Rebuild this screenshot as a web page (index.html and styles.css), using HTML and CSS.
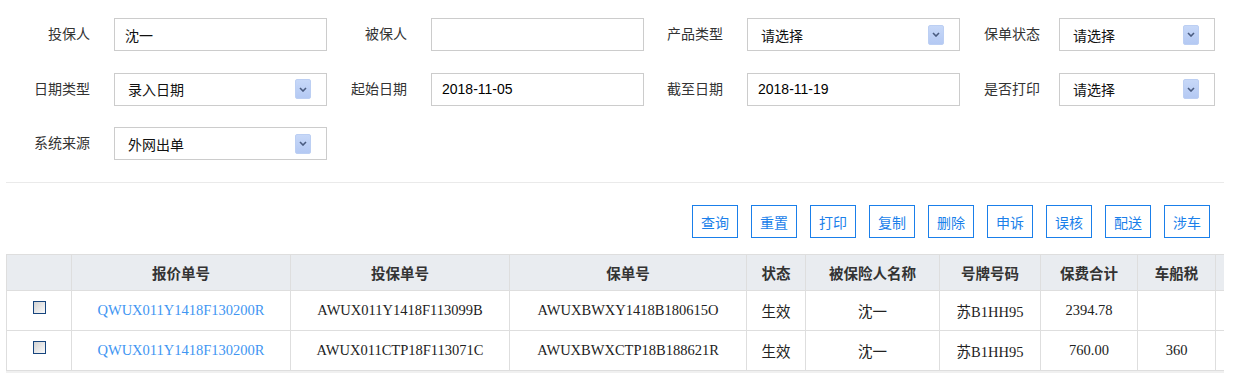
FILE: index.html
```html
<!DOCTYPE html>
<html lang="zh-CN">
<head>
<meta charset="utf-8">
<title>保单查询</title>
<link rel="stylesheet" href="styles.css">
</head>
<body>
<form class="search-form">
  <label class="lbl">投保人</label>
  <div class="field"><span class="val">沈一</span></div>
  <label class="lbl">被保人</label>
  <div class="field"></div>
  <label class="lbl">产品类型</label>
  <div class="field select"><span class="val">请选择</span><span class="arrow"><svg width="8" height="5" viewBox="0 0 8 5"><path d="M1 1 L4 4 L7 1" fill="none" stroke="#4a5c80" stroke-width="1.6"/></svg></span></div>
  <label class="lbl lbl-narrow">保单状态</label>
  <div class="field select"><span class="val">请选择</span><span class="arrow"><svg width="8" height="5" viewBox="0 0 8 5"><path d="M1 1 L4 4 L7 1" fill="none" stroke="#4a5c80" stroke-width="1.6"/></svg></span></div>

  <label class="lbl">日期类型</label>
  <div class="field select"><span class="val">录入日期</span><span class="arrow"><svg width="8" height="5" viewBox="0 0 8 5"><path d="M1 1 L4 4 L7 1" fill="none" stroke="#4a5c80" stroke-width="1.6"/></svg></span></div>
  <label class="lbl">起始日期</label>
  <div class="field"><span class="val date">2018-11-05</span></div>
  <label class="lbl">截至日期</label>
  <div class="field"><span class="val date">2018-11-19</span></div>
  <label class="lbl lbl-narrow">是否打印</label>
  <div class="field select"><span class="val">请选择</span><span class="arrow"><svg width="8" height="5" viewBox="0 0 8 5"><path d="M1 1 L4 4 L7 1" fill="none" stroke="#4a5c80" stroke-width="1.6"/></svg></span></div>

  <label class="lbl">系统来源</label>
  <div class="field select"><span class="val">外网出单</span><span class="arrow"><svg width="8" height="5" viewBox="0 0 8 5"><path d="M1 1 L4 4 L7 1" fill="none" stroke="#4a5c80" stroke-width="1.6"/></svg></span></div>
</form>

<div class="content">
  <div class="divider"></div>
  <div class="toolbar">
    <button class="btn" type="button">查询</button>
    <button class="btn" type="button">重置</button>
    <button class="btn" type="button">打印</button>
    <button class="btn" type="button">复制</button>
    <button class="btn" type="button">删除</button>
    <button class="btn" type="button">申诉</button>
    <button class="btn" type="button">误核</button>
    <button class="btn" type="button">配送</button>
    <button class="btn" type="button">涉车</button>
  </div>
  <div class="table-wrap">
    <table class="grid">
      <colgroup>
        <col class="c-chk"><col class="c-quote"><col class="c-app"><col class="c-pol"><col class="c-state"><col class="c-name"><col class="c-plate"><col class="c-fee"><col class="c-tax"><col class="c-more">
      </colgroup>
      <thead>
        <tr><th></th><th>报价单号</th><th>投保单号</th><th>保单号</th><th>状态</th><th>被保险人名称</th><th>号牌号码</th><th>保费合计</th><th>车船税</th><th></th></tr>
      </thead>
      <tbody>
        <tr>
          <td><span class="chk"></span></td>
          <td><a class="link">QWUX011Y1418F130200R</a></td>
          <td>AWUX011Y1418F113099B</td>
          <td>AWUXBWXY1418B180615O</td>
          <td>生效</td>
          <td>沈一</td>
          <td>苏B1HH95</td>
          <td>2394.78</td>
          <td></td>
          <td></td>
        </tr>
        <tr>
          <td><span class="chk"></span></td>
          <td><a class="link">QWUX011Y1418F130200R</a></td>
          <td>AWUX011CTP18F113071C</td>
          <td>AWUXBWXCTP18B188621R</td>
          <td>生效</td>
          <td>沈一</td>
          <td>苏B1HH95</td>
          <td>760.00</td>
          <td>360</td>
          <td></td>
        </tr>
      </tbody>
    </table>
    <div class="hscroll"></div>
  </div>
</div>
</body>
</html>
```

FILE: styles.css
```css
html, body {
  margin: 0;
  padding: 0;
  background: #fff;
}
body {
  font-family: "Noto Sans CJK SC", "Liberation Sans", sans-serif;
  font-size: 14px;
  color: #333;
}

.search-form {
  display: grid;
  grid-template-columns: 114px 213px 104px 213px 103px 213px 99px 156px;
  grid-auto-rows: 33px;
  row-gap: 21.5px;
  padding: 18px 0 22px 0;
  margin: 0;
}
.lbl {
  display: flex;
  align-items: center;
  justify-content: flex-end;
  padding-right: 24px;
  color: #333;
  font-size: 14px;
  line-height: 1;
  margin-top: -3px;
}
.lbl-narrow {
  padding-right: 19px;
}
.field {
  box-sizing: border-box;
  height: 33px;
  border: 1px solid #ccc;
  background: #fff;
  display: flex;
  align-items: center;
  padding-left: 10px;
}
.val {
  color: #111;
  font-size: 14px;
  line-height: 1;
}
.date {
  font-family: "Liberation Sans", Arial, sans-serif;
  color: #000;
}
.select {
  justify-content: space-between;
  padding-left: 13px;
  padding-right: 15px;
}
.arrow {
  width: 16px;
  height: 20px;
  box-sizing: border-box;
  border-radius: 2px;
  background: linear-gradient(#c7d8f8, #b4c9f3);
  border: 1px solid #bccff3;
  display: flex;
  align-items: center;
  justify-content: center;
}

.content {
  padding: 0 10px 0 6px;
}
.divider {
  height: 1px;
  background: #eaeaea;
}
.toolbar {
  display: flex;
  justify-content: flex-end;
  gap: 13px;
  padding-right: 14px;
  margin-top: 22px;
}
.btn {
  box-sizing: border-box;
  width: 46px;
  height: 33px;
  padding: 0;
  border: 1px solid #1a7fea;
  background: #fff;
  color: #1a7fea;
  font-family: "Noto Sans CJK SC", sans-serif;
  font-size: 14px;
  cursor: pointer;
}

.table-wrap {
  margin-top: 16px;
  overflow: hidden;
}
.grid {
  border-collapse: collapse;
  table-layout: fixed;
  width: 1309px;
}
.c-chk { width: 65px; }
.c-quote { width: 219px; }
.c-app { width: 219px; }
.c-pol { width: 237px; }
.c-state { width: 59px; }
.c-name { width: 134px; }
.c-plate { width: 101px; }
.c-fee { width: 97px; }
.c-tax { width: 78px; }
.c-more { width: 100px; }

.grid th, .grid td {
  border: 1px solid #dedede;
  text-align: center;
  padding: 0;
}
.grid th {
  height: 35px;
  background: #e9ecf0;
  font-weight: bold;
  color: #333;
  font-size: 14.5px;
}
.grid td {
  height: 39px;
  font-family: "Liberation Serif", "Noto Sans CJK SC", serif;
  font-size: 14.5px;
  color: #222;
}
.link {
  color: #3f96f2;
  text-decoration: none;
}
.chk {
  display: inline-block;
  box-sizing: border-box;
  width: 13px;
  height: 13px;
  border: 1px solid #17457d;
  background: linear-gradient(135deg, #d2d2d2, #fafafa);
  vertical-align: middle;
  margin-bottom: 6px;
}
.hscroll {
  height: 17px;
  background: #f0f0f0;
}
```
